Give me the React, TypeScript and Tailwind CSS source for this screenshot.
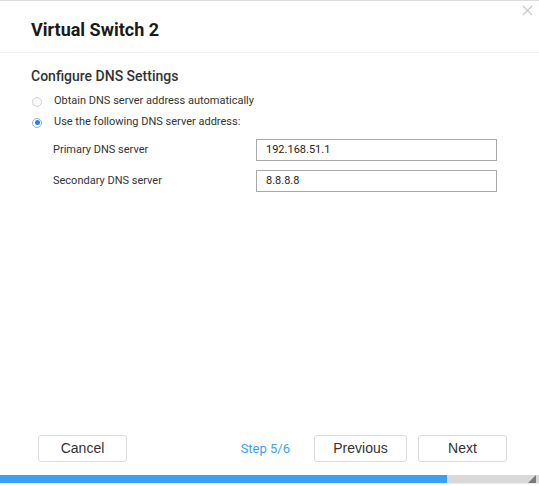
import React from "react";

function Radio({ checked }: { checked?: boolean }) {
  return (
    <span
      className={
        "flex h-[10px] w-[10px] items-center justify-center rounded-full border " +
        (checked ? "border-[#7fb4ea] bg-white" : "border-[#d4d4d4] bg-[#fafafa]")
      }
    >
      {checked && <span className="h-[5px] w-[5px] rounded-full bg-[#2f7fd8]" />}
    </span>
  );
}

export default function App() {
  return (
    <div
      className="relative flex h-[486px] w-[539px] flex-col border-t border-[#dcdcdc] bg-white text-[#333]"
      style={{ fontFamily: "Roboto, 'Noto Sans', sans-serif" }}
    >
      <button className="absolute right-[6px] top-[4px] text-[#c8c8c8]">
        <svg width="11" height="11" viewBox="0 0 11 11">
          <path d="M1 1L10 10M10 1L1 10" stroke="currentColor" strokeWidth="1.2" />
        </svg>
      </button>
      <div className="h-[52px] border-b border-[#f2f2f2] pl-[31px] pt-[18px]">
        <h1 className="text-[18px] font-bold leading-[22px] text-[#1a1a1a]">Virtual Switch 2</h1>
      </div>
      <div className="flex flex-1 flex-col pl-[31px] pt-[13px]">
        <h2 className="text-[14px] font-medium leading-[20px] text-[#333]">Configure DNS Settings</h2>
        <div className="mt-[8px] flex flex-col gap-[6px] text-[11px] text-[#333]">
          <label className="flex h-[15px] items-center gap-[12px] pl-[1px]">
            <Radio />
            <span>Obtain DNS server address automatically</span>
          </label>
          <label className="flex h-[15px] items-center gap-[12px] pl-[1px]">
            <Radio checked />
            <span>Use the following DNS server address:</span>
          </label>
        </div>
        <div className="mt-[9px] flex flex-col gap-[9px] pl-[22px] text-[11px]">
          <div className="flex items-center">
            <span className="w-[203px]">Primary DNS server</span>
            <div className="flex h-[22px] w-[241px] items-center border border-[#a9a9a9] px-[9px] text-[#222]">
              192.168.51.1
            </div>
          </div>
          <div className="flex items-center">
            <span className="w-[203px]">Secondary DNS server</span>
            <div className="flex h-[22px] w-[241px] items-center border border-[#a9a9a9] px-[9px] text-[#222]">
              8.8.8.8
            </div>
          </div>
        </div>
      </div>
      <div
        className="flex items-center pb-[13px] pl-[38px] pr-[32px] text-[14px]"
        style={{ fontFamily: "'Liberation Sans', Arial, sans-serif" }}
      >
        <button className="h-[27px] w-[89px] rounded-[3px] border border-[#dcdcdc] bg-white text-[#333]">
          Cancel
        </button>
        <span
          className="ml-auto mr-[24px] text-[13px] text-[#3ba0f5]"
          style={{ fontFamily: "Roboto, sans-serif" }}
        >
          Step 5/6
        </span>
        <button className="h-[27px] w-[93px] rounded-[3px] border border-[#dcdcdc] bg-white text-[#333]">
          Previous
        </button>
        <button className="ml-[11px] h-[27px] w-[89px] rounded-[3px] border border-[#dcdcdc] bg-white text-[#333]">
          Next
        </button>
      </div>
      <div className="relative flex h-[8px] w-full bg-[#d9d9d9]">
        <div className="h-full bg-[#3b9ff5]" style={{ width: `${(5 / 6) * 536}px` }} />
        <svg className="absolute right-[3px] top-[0px]" width="8" height="8" viewBox="0 0 8 8">
          <path d="M8 0L8 8L0 8Z" fill="#7a7a7a" />
        </svg>
      </div>
      <div className="h-[3px] border-t border-[#eaeaea] bg-white" />
    </div>
  );
}
